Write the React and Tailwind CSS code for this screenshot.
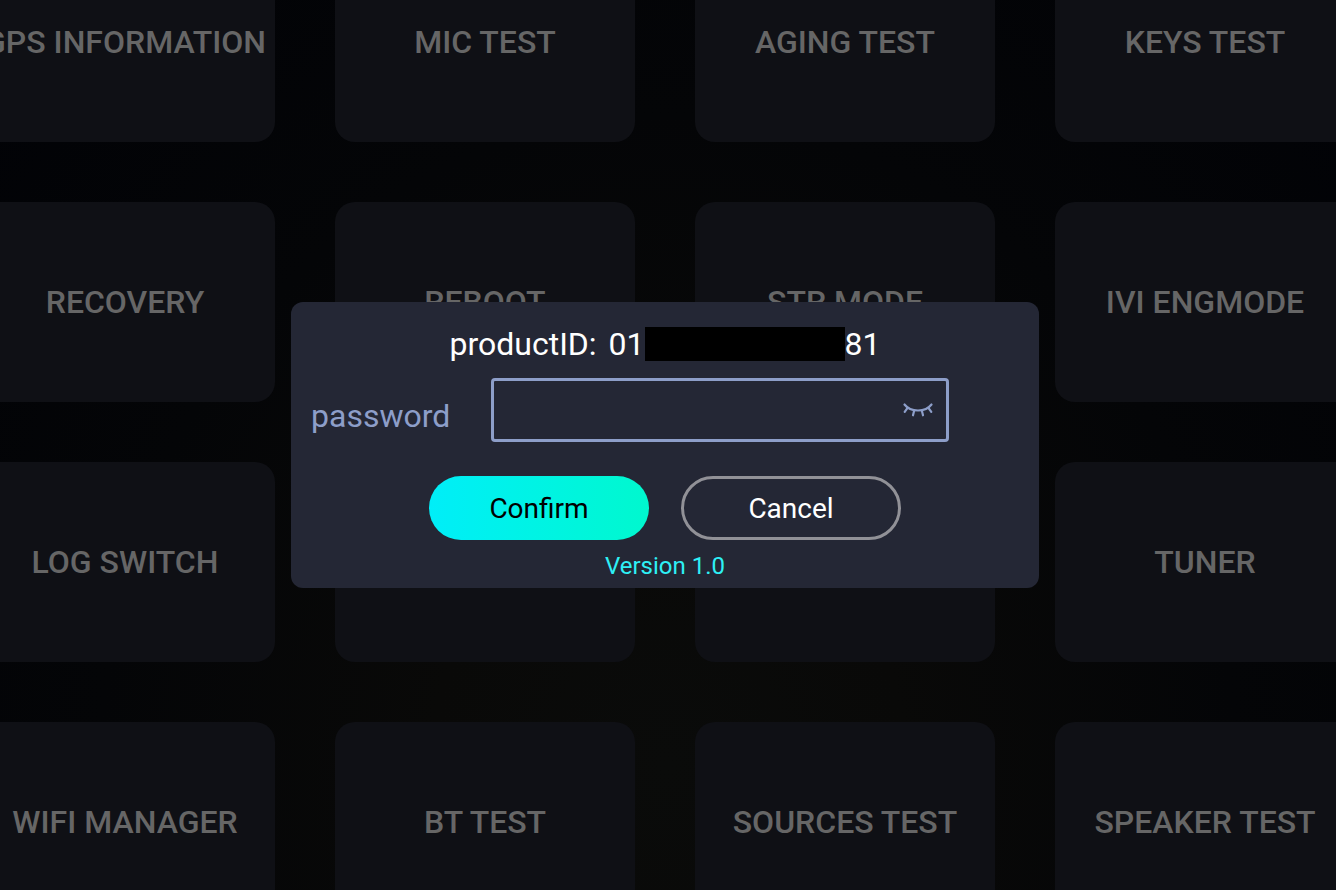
import { useState } from 'react';

const tiles = [
  'GPS INFORMATION',
  'MIC TEST',
  'AGING TEST',
  'KEYS TEST',
  'RECOVERY',
  'REBOOT',
  'STR MODE',
  'IVI ENGMODE',
  'LOG SWITCH',
  '',
  '',
  'TUNER',
  'WIFI MANAGER',
  'BT TEST',
  'SOURCES TEST',
  'SPEAKER TEST',
];

const ClosedEye = () => (
  <svg
    viewBox="0 0 30 14"
    className="w-[30px] h-[14px]"
    fill="none"
    stroke="currentColor"
    strokeWidth="2.2"
    strokeLinecap="round"
    strokeLinejoin="round"
  >
    <path d="M1.500 1.500C4.500 5.400 9.200 7.500 15 7.500S25.500 5.400 28.500 1.500" />
    <path d="M4.600 4.800L1.700 8.800M25.400 4.800L28.300 8.800" />
    <path d="M11.200 7.600L10 12.300M18.800 7.600L20 12.300" />
  </svg>
);

const App = () => {
  const [password, setPassword] = useState('');
  const [visible, setVisible] = useState(false);

  return (
    <div className="relative h-screen overflow-hidden pr-1.5 font-[Roboto,sans-serif] bg-[radial-gradient(ellipse_at_50%_86%,#0a0b0a_0%,#090908_25%,#040507_60%,#010206_100%)]">
      <main className="-mt-[58px] grid grid-cols-[repeat(4,300px)] auto-rows-[200px] gap-[60px] justify-center">
        {tiles.map((label, i) => (
          <button
            key={i}
            type="button"
            className="rounded-[20px] bg-[#0f1015] text-[32px] leading-10 font-medium text-[#666666] whitespace-nowrap"
          >
            {label}
          </button>
        ))}
      </main>

      {/* password dialog */}
      <div className="absolute inset-0 pr-1.5 flex items-center justify-center">
        <form
          role="dialog"
          onSubmit={(e) => e.preventDefault()}
          className="w-[748px] rounded-xl bg-[#242735] px-5 pt-6 pb-2"
        >
          <div className="flex items-center justify-center text-[32px] leading-9 text-white">
            <span className="mr-3">productID:</span>
            <span>01</span>
            <span className="w-[200px] h-[34px] bg-black" />
            <span>81</span>
          </div>

          <div className="mt-4 flex items-center">
            <label htmlFor="password" className="w-[180px] pt-3 text-[32px] leading-9 text-[#8d9ec9]">
              password
            </label>
            <div className="relative w-[458px]">
              <input
                id="password"
                type={visible ? 'text' : 'password'}
                value={password}
                onChange={(e) => setPassword(e.target.value)}
                className="block w-full h-16 rounded border-3 border-[#8d9ec9] bg-transparent pl-4 pr-16 text-[32px] text-white outline-none"
              />
              <button
                type="button"
                aria-label="Show password"
                onClick={() => setVisible(!visible)}
                className="absolute inset-y-0 right-4 flex items-center text-[#8d9ec9]"
              >
                <ClosedEye />
              </button>
            </div>
          </div>

          <div className="mt-[34px] flex justify-center gap-8 text-[28px] leading-9">
            <button
              type="submit"
              className="w-[220px] h-16 pt-0.5 rounded-full bg-linear-to-r from-[#00eef8] to-[#00f8ce] text-black"
            >
              Confirm
            </button>
            <button
              type="button"
              className="w-[220px] h-16 pt-0.5 rounded-full border-3 border-[#919197] text-white"
            >
              Cancel
            </button>
          </div>

          <p className="mt-3 text-center text-2xl leading-7 text-[#2ef0f5]">Version 1.0</p>
        </form>
      </div>
    </div>
  );
};

export default App;
